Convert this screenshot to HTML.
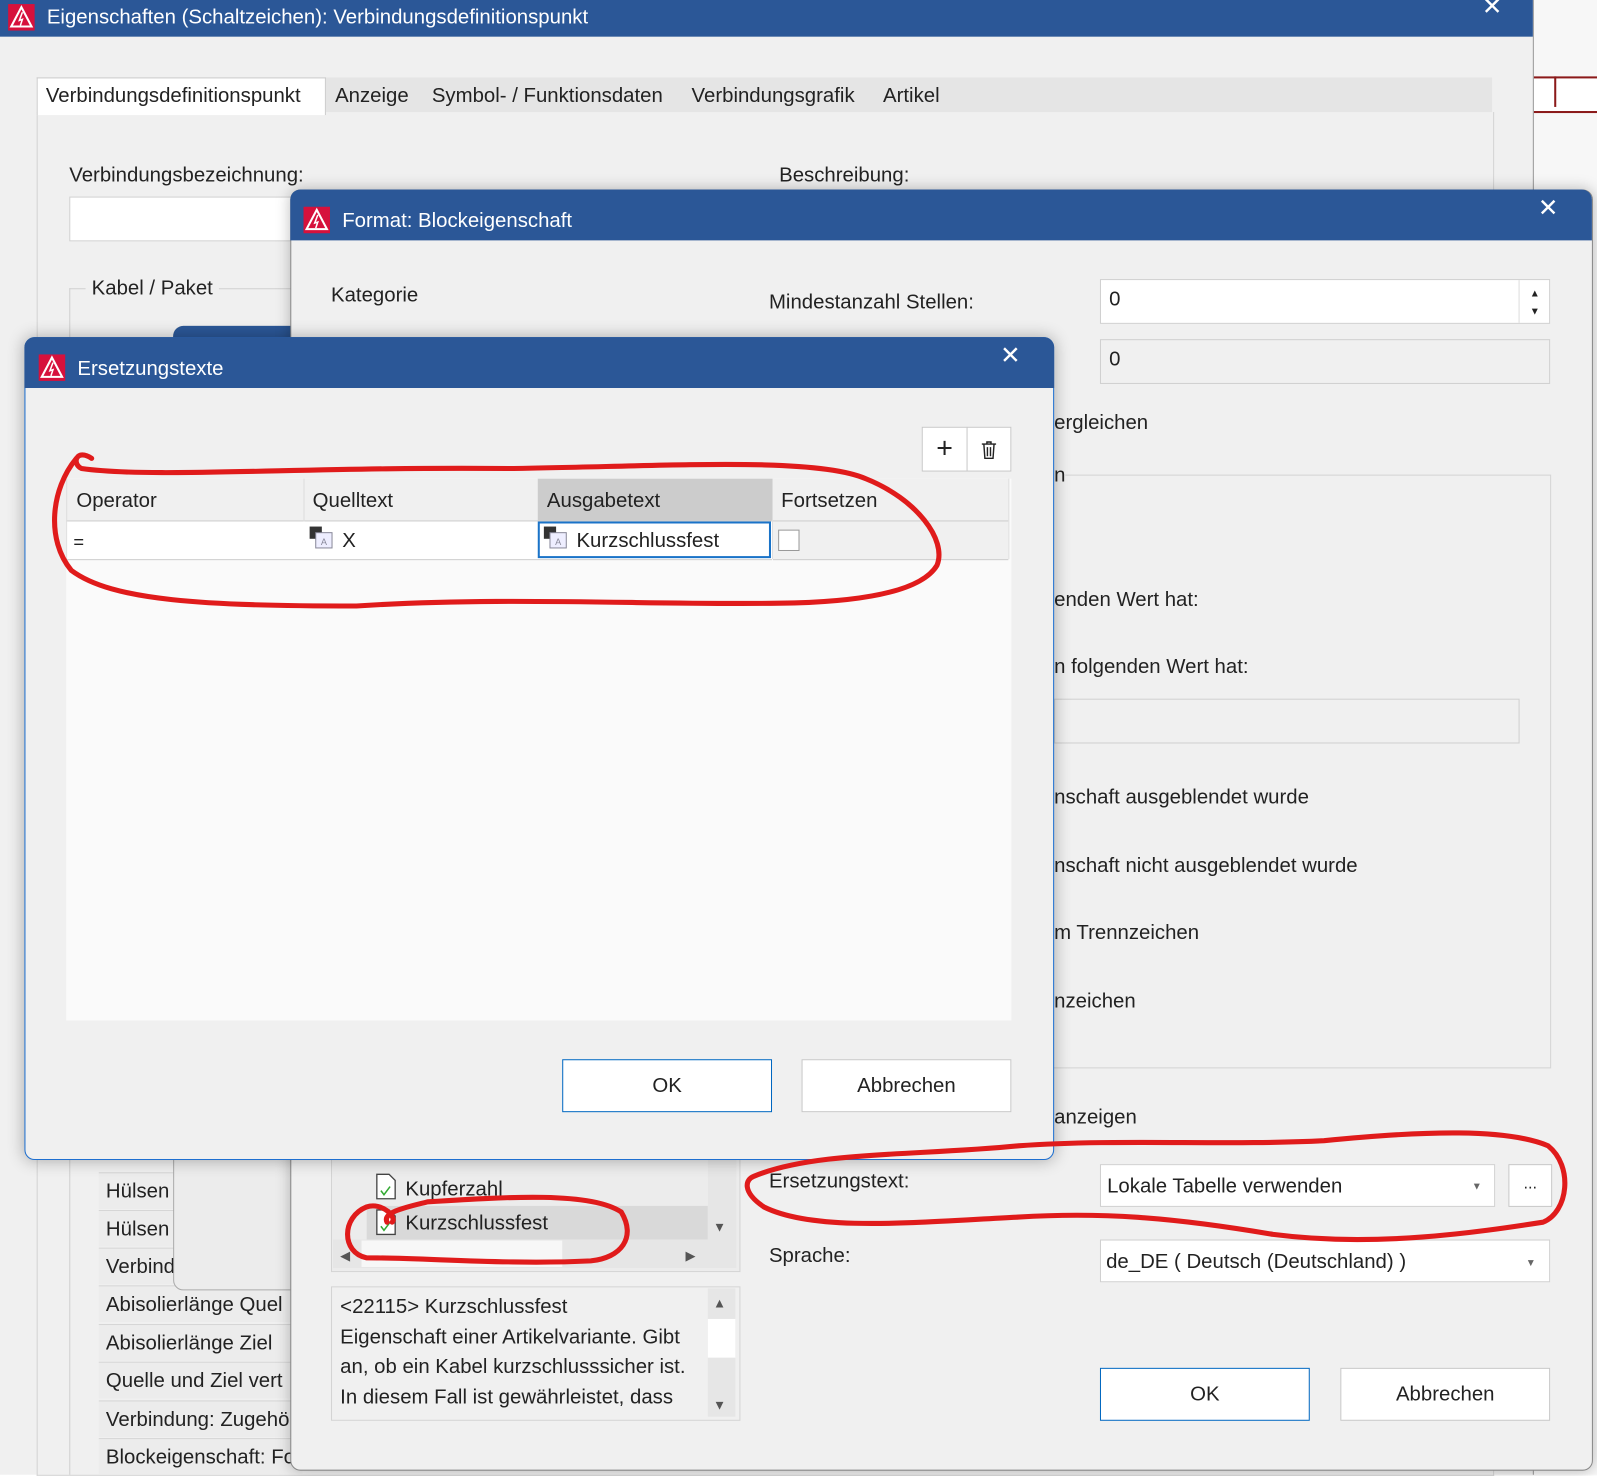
<!DOCTYPE html>
<html><head><meta charset="utf-8">
<style>
html,body{margin:0;padding:0;width:1597px;height:1475px;overflow:hidden;background:#fff}
#w{position:absolute;left:0;top:0;width:1568px;height:1448px;transform:scale(1.01849);transform-origin:0 0;font-family:"Liberation Sans",sans-serif;font-size:19px;color:#222}
.a{position:absolute;white-space:nowrap}
.t{position:absolute;white-space:nowrap;line-height:22px}
.blue{background:#2b5797}
.in{position:absolute;background:#fff;border:1px solid #d0d0d0;box-sizing:border-box}
.btn{position:absolute;background:#fff;border:1px solid #c8c8c8;box-sizing:border-box;text-align:center;font-size:20px}
.row{position:absolute;left:97px;width:200px;height:36px;border-top:1px solid #d6d6d6;background:#ececec;box-sizing:border-box;padding:7px 0 0 7px;font-size:20px;overflow:hidden}
.logo{position:absolute;width:26px;height:26px;background:#d6113c}
</style></head><body><div id="w">
<!-- right background strip -->
<div class="a" style="left:1505px;top:0;width:63px;height:1448px;background:#f7f7f7"></div>
<div class="a" style="left:1505px;top:75px;width:63px;height:32px;border-top:2px solid #8b1a1a;border-bottom:2px solid #8b1a1a;background:#fff"></div>
<div class="a" style="left:1526px;top:75px;width:2px;height:30px;background:#8b1a1a"></div>
<!-- main dialog -->
<div class="a" style="left:0;top:0;width:1505px;height:1448px;background:#f0f0f0;border-right:1px solid #999"></div>
<div class="a blue" style="left:0;top:0;width:1505px;height:36px"></div>
<div class="logo" style="left:8px;top:4px"><svg width="26" height="26"><path d="M13 3 L23 22 L3 22 Z" fill="none" stroke="#fff" stroke-width="2"/><path d="M14 8 L11 16 L14 15 L12 21" stroke="#fff" fill="none" stroke-width="1.5"/></svg></div>
<div class="t" style="left:46px;top:6px;color:#fff;font-size:20px">Eigenschaften (Schaltzeichen): Verbindungsdefinitionspunkt</div>
<div class="t" style="left:1455px;top:-4px;color:#fff;font-size:24px">✕</div>
<div class="a" style="left:36px;top:76px;width:1429px;height:34px;background:#e5e5e5;border-bottom:1px solid #ccc"></div>
<div class="a" style="left:36px;top:110px;width:1429px;height:1338px;border:1px solid #d4d4d4;border-top:none;background:#f0f0f0"></div>
<div class="a" style="left:36px;top:76px;width:282px;height:36px;background:#fff;border:1px solid #ccc;border-bottom:none"></div>
<div class="t" style="left:45px;top:83px;font-size:20px">Verbindungsdefinitionspunkt</div>
<div class="t" style="left:329px;top:83px;font-size:20px">Anzeige</div>
<div class="t" style="left:424px;top:83px;font-size:20px">Symbol- / Funktionsdaten</div>
<div class="t" style="left:679px;top:83px;font-size:20px">Verbindungsgrafik</div>
<div class="t" style="left:867px;top:83px;font-size:20px">Artikel</div>
<div class="t" style="left:68px;top:161px;font-size:20px">Verbindungsbezeichnung:</div>
<div class="t" style="left:765px;top:161px;font-size:20px">Beschreibung:</div>
<div class="in" style="left:68px;top:193px;width:230px;height:44px"></div>
<div class="a" style="left:68px;top:283px;width:230px;height:1px;background:#d0d0d0"></div>
<div class="a" style="left:68px;top:283px;width:1px;height:1165px;background:#d0d0d0"></div>
<div class="t" style="left:84px;top:272px;font-size:20px;background:#f0f0f0;padding:0 6px">Kabel / Paket</div>
<div class="row" style="top:1151px">Hülsen</div>
<div class="row" style="top:1188px">Hülsen</div>
<div class="row" style="top:1225px">Verbind</div>
<div class="row" style="top:1262px">Abisolierlänge Quel</div>
<div class="row" style="top:1300px">Abisolierlänge Ziel</div>
<div class="row" style="top:1337px">Quelle und Ziel vert</div>
<div class="row" style="top:1375px">Verbindung: Zugehö</div>
<div class="row" style="top:1412px">Blockeigenschaft: Fo</div>
<div class="a" style="left:170px;top:320px;width:130px;height:945px;background:#ececec;border:1px solid #aaa;border-radius:10px"></div>
<div class="a blue" style="left:170px;top:320px;width:130px;height:20px;border-radius:10px 0 0 0"></div>
<!-- Format dialog -->
<div class="a" style="left:285px;top:186px;width:1277px;height:1256px;background:#f0f0f0;border:1px solid #888;border-radius:10px;box-shadow:0 0 14px rgba(0,0,0,.25)"></div>
<div class="a blue" style="left:285px;top:186px;width:1278px;height:50px;border-radius:10px 10px 0 0"></div>
<div class="logo" style="left:298px;top:203px"><svg width="26" height="26"><path d="M13 3 L23 22 L3 22 Z" fill="none" stroke="#fff" stroke-width="2"/><path d="M14 8 L11 16 L14 15 L12 21" stroke="#fff" fill="none" stroke-width="1.5"/></svg></div>
<div class="t" style="left:336px;top:206px;color:#fff;font-size:20px">Format: Blockeigenschaft</div>
<div class="t" style="left:1510px;top:194px;color:#fff;font-size:24px">✕</div>
<div class="t" style="left:325px;top:279px;font-size:20px">Kategorie</div>
<div class="t" style="left:755px;top:286px;font-size:20px">Mindestanzahl Stellen:</div>
<div class="in" style="left:1080px;top:274px;width:442px;height:44px"></div>
<div class="a" style="left:1491px;top:275px;width:1px;height:42px;background:#ddd"></div>
<div class="t" style="left:1502px;top:278px;font-size:10px">▲</div>
<div class="t" style="left:1502px;top:296px;font-size:10px">▼</div>
<div class="t" style="left:1089px;top:283px;font-size:20px">0</div>
<div class="in" style="left:1080px;top:333px;width:442px;height:44px;background:#f0f0f0"></div>
<div class="t" style="left:1089px;top:342px;font-size:20px">0</div>
<div class="t" style="left:1035px;top:404px;font-size:20px">ergleichen</div>
<div class="a" style="left:1030px;top:466px;width:491px;height:581px;border:1px solid #d4d4d4"></div>
<div class="t" style="left:1035px;top:456px;font-size:20px;background:#f0f0f0">n</div>
<div class="t" style="left:1035px;top:578px;font-size:20px">enden Wert hat:</div>
<div class="t" style="left:1035px;top:644px;font-size:20px">n folgenden Wert hat:</div>
<div class="in" style="left:1035px;top:686px;width:457px;height:44px;background:#f0f0f0"></div>
<div class="t" style="left:1035px;top:772px;font-size:20px">nschaft ausgeblendet wurde</div>
<div class="t" style="left:1035px;top:839px;font-size:20px">nschaft nicht ausgeblendet wurde</div>
<div class="t" style="left:1035px;top:905px;font-size:20px">m Trennzeichen</div>
<div class="t" style="left:1035px;top:972px;font-size:20px">nzeichen</div>
<div class="t" style="left:1035px;top:1086px;font-size:20px">anzeigen</div>
<div class="t" style="left:755px;top:1149px;font-size:20px">Ersetzungstext:</div>
<div class="in" style="left:1080px;top:1143px;width:388px;height:42px"></div>
<div class="t" style="left:1087px;top:1154px;font-size:20px">Lokale Tabelle verwenden</div>
<div class="t" style="left:1445px;top:1155px;font-size:10px;color:#666">▼</div>
<div class="btn" style="left:1481px;top:1143px;width:43px;height:42px;padding-top:10px;font-size:16px">...</div>
<div class="t" style="left:755px;top:1222px;font-size:20px">Sprache:</div>
<div class="in" style="left:1080px;top:1217px;width:442px;height:42px"></div>
<div class="t" style="left:1086px;top:1228px;font-size:20px">de_DE ( Deutsch (Deutschland) )</div>
<div class="t" style="left:1498px;top:1230px;font-size:10px;color:#666">▼</div>
<div class="btn" style="left:1080px;top:1343px;width:206px;height:52px;border:1px solid #0067c0;padding-top:14px">OK</div>
<div class="btn" style="left:1316px;top:1343px;width:206px;height:52px;padding-top:14px">Abbrechen</div>
<!-- tree -->
<div class="a" style="left:325px;top:1100px;width:400px;height:147px;background:#ececec;border:1px solid #d4d4d4"></div>
<div class="a" style="left:360px;top:1184px;width:335px;height:33px;background:#d9d9d9"></div>
<div class="a" style="left:695px;top:1100px;width:28px;height:117px;background:#e6e6e6"></div>
<div class="t" style="left:700px;top:1194px;font-size:13px;color:#555">▼</div>
<div class="a" style="left:327px;top:1217px;width:396px;height:28px;background:#e6e6e6"></div>
<div class="a" style="left:355px;top:1218px;width:197px;height:26px;background:#f7f7f7"></div>
<div class="t" style="left:334px;top:1222px;font-size:13px;color:#555">◀</div>
<div class="t" style="left:673px;top:1222px;font-size:13px;color:#555">▶</div>
<svg class="a" style="left:368px;top:1152px" width="22" height="26"><path d="M2 1h12l6 6v18H2z" fill="#fff" stroke="#444" stroke-width="1.3"/><path d="M6 17l3 4 6-8" stroke="#3a3" fill="none" stroke-width="1.5"/></svg>
<svg class="a" style="left:368px;top:1187px" width="22" height="26"><path d="M2 1h12l6 6v18H2z" fill="#fff" stroke="#444" stroke-width="1.3"/><path d="M6 17l3 4 6-8" stroke="#3a3" fill="none" stroke-width="1.5"/></svg>
<div class="t" style="left:398px;top:1157px;font-size:20px">Kupferzahl</div>
<div class="t" style="left:398px;top:1190px;font-size:20px">Kurzschlussfest</div>
<div class="a" style="left:325px;top:1263px;width:400px;height:130px;background:#f0f0f0;border:1px solid #d4d4d4;overflow:hidden"></div>
<div class="a" style="left:695px;top:1265px;width:27px;height:126px;background:#e6e6e6"></div>
<div class="a" style="left:695px;top:1295px;width:27px;height:38px;background:#fff"></div>
<div class="t" style="left:700px;top:1269px;font-size:13px;color:#555">▲</div>
<div class="t" style="left:700px;top:1369px;font-size:13px;color:#555">▼</div>
<div class="a" style="left:334px;top:1269px;font-size:20px;line-height:29.5px;white-space:normal;width:355px;height:122px;overflow:hidden">&lt;22115&gt; Kurzschlussfest<br>Eigenschaft einer Artikelvariante. Gibt an, ob ein Kabel kurzschlusssicher ist. In diesem Fall ist gewährleistet, dass dies auch der Fall ist</div>
<!-- Ersetzungstexte dialog -->
<div class="a" style="left:24px;top:331px;width:1009px;height:806px;background:#f0f0f0;border:1px solid #1e6fd0;border-radius:10px;box-shadow:0 0 16px rgba(0,0,0,.3)"></div>
<div class="a blue" style="left:24px;top:331px;width:1011px;height:50px;border-radius:10px 10px 0 0"></div>
<div class="logo" style="left:38px;top:348px"><svg width="26" height="26"><path d="M13 3 L23 22 L3 22 Z" fill="none" stroke="#fff" stroke-width="2"/><path d="M14 8 L11 16 L14 15 L12 21" stroke="#fff" fill="none" stroke-width="1.5"/></svg></div>
<div class="t" style="left:76px;top:351px;color:#fff;font-size:20px">Ersetzungstexte</div>
<div class="t" style="left:982px;top:339px;color:#fff;font-size:24px">✕</div>
<div class="btn" style="left:905px;top:419px;width:45px;height:44px;font-size:28px;line-height:40px">+</div>
<div class="btn" style="left:949px;top:419px;width:44px;height:44px"><svg width="20" height="22" style="margin-top:11px"><path d="M3 5h14M8 5V3h4v2M5 5l1 14h8l1-14M8.5 8v9M11.5 8v9" stroke="#222" fill="none" stroke-width="1.4"/></svg></div>
<div class="a" style="left:65px;top:470px;width:928px;height:532px;background:#fafafa"></div>
<div class="a" style="left:65px;top:470px;width:925px;height:41px;background:#f0f0f0;border-bottom:1px solid #ccc"></div>
<div class="a" style="left:528px;top:470px;width:230px;height:41px;background:#cccccc"></div>
<div class="a" style="left:298px;top:470px;width:1px;height:79px;background:#ddd"></div>
<div class="a" style="left:758px;top:470px;width:1px;height:79px;background:#ddd"></div>
<div class="a" style="left:990px;top:470px;width:1px;height:79px;background:#ddd"></div>
<div class="a" style="left:65px;top:470px;width:1px;height:79px;background:#ddd"></div>
<div class="t" style="left:75px;top:481px;font-size:20px">Operator</div>
<div class="t" style="left:307px;top:481px;font-size:20px">Quelltext</div>
<div class="t" style="left:537px;top:481px;font-size:20px">Ausgabetext</div>
<div class="t" style="left:767px;top:481px;font-size:20px">Fortsetzen</div>
<div class="a" style="left:66px;top:512px;width:692px;height:37px;background:#fff;border-bottom:1px solid #ccc"></div>
<div class="a" style="left:759px;top:512px;width:231px;height:37px;background:#f0f0f0;border-bottom:1px solid #ccc"></div>
<div class="a" style="left:528px;top:512px;width:229px;height:36px;border:2px solid #1a73c8;box-sizing:border-box"></div>
<div class="t" style="left:72px;top:521px;font-size:18px">=</div>
<svg class="a" style="left:303px;top:516px" width="26" height="24"><rect x="1" y="1" width="12" height="12" fill="#333"/><rect x="7" y="7" width="16" height="15" fill="#eef" stroke="#889"/><text x="12" y="19" font-size="9" fill="#889" font-family="Liberation Sans">A</text></svg>
<svg class="a" style="left:533px;top:516px" width="26" height="24"><rect x="1" y="1" width="12" height="12" fill="#333"/><rect x="7" y="7" width="16" height="15" fill="#eef" stroke="#889"/><text x="12" y="19" font-size="9" fill="#889" font-family="Liberation Sans">A</text></svg>
<div class="t" style="left:336px;top:520px;font-size:20px">X</div>
<div class="t" style="left:566px;top:520px;font-size:20px">Kurzschlussfest</div>
<div class="a" style="left:764px;top:520px;width:19px;height:19px;background:#fff;border:1px solid #999"></div>
<div class="btn" style="left:552px;top:1040px;width:206px;height:52px;border:1px solid #0067c0;padding-top:14px">OK</div>
<div class="btn" style="left:787px;top:1040px;width:206px;height:52px;padding-top:14px">Abbrechen</div>
<!-- red annotations -->
<svg class="a" style="left:0;top:0" width="1568" height="1448" fill="none" stroke="#e01b1b" stroke-width="5" stroke-linecap="round" stroke-linejoin="round">
<path d="M90 450 C75 440 70 455 80 460 C150 470 300 458 500 460 C650 458 800 448 850 470 C900 490 930 530 920 555 C905 580 850 590 780 592 C650 595 500 585 350 595 C200 595 110 590 70 560 C45 530 50 480 75 450"/>
<path d="M740 1155 C800 1130 900 1135 1000 1125 C1100 1118 1200 1125 1300 1120 C1400 1110 1480 1108 1520 1125 C1545 1145 1540 1190 1515 1200 C1450 1210 1350 1225 1250 1212 C1150 1195 1080 1190 1000 1195 C900 1200 800 1210 750 1185 C728 1170 732 1158 740 1155"/>
<path d="M380 1200 C375 1190 400 1185 420 1180 C500 1175 580 1170 610 1190 C625 1215 610 1235 580 1238 C500 1242 420 1235 360 1235 C335 1230 335 1195 360 1185 C375 1180 390 1195 385 1200"/>
</svg>
</div></body></html>
